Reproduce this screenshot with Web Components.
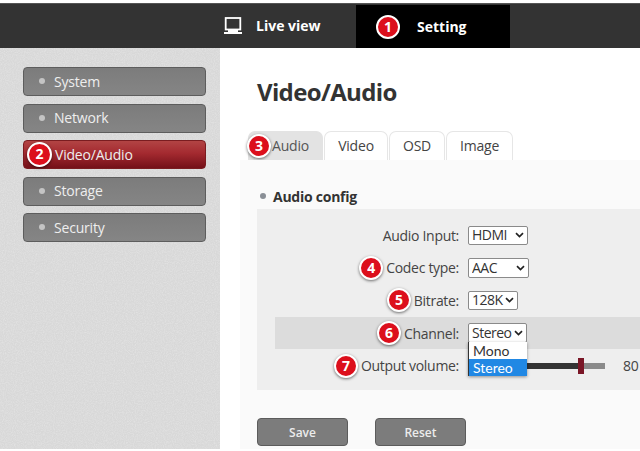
<!DOCTYPE html>
<html lang="en">
<head>
<meta charset="utf-8">
<title>Video/Audio</title>
<style>
html,body{margin:0;padding:0;background:#fff;}
body{width:640px;height:451px;overflow:hidden;font-family:"Open Sans","Liberation Sans",sans-serif;color:#333;}
</style>
</head>
<body>
<app-shell>
  <top-bar slot="top">
    <nav-link>
      <svg slot="icon" width="20" height="18" viewBox="0 0 20 18" fill="none"><rect x="2.7" y="1" width="14.6" height="11.5" stroke="#fff" stroke-width="1.8"/><rect x="5" y="13" width="10" height="2" fill="#fff"/><rect x="1" y="15" width="18" height="2" fill="#fff"/></svg>
      Live view
    </nav-link>
    <nav-link active><num-badge slot="icon" n="1"></num-badge>Setting</nav-link>
  </top-bar>
  <side-menu slot="side">
    <menu-item>System</menu-item>
    <menu-item>Network</menu-item>
    <menu-item active><num-badge slot="mark" n="2"></num-badge>Video/Audio</menu-item>
    <menu-item>Storage</menu-item>
    <menu-item>Security</menu-item>
  </side-menu>
  <video-page slot="main">
    <tab-strip slot="tabs">
      <tab-button active w="75"><num-badge slot="mark" n="3"></num-badge>Audio</tab-button>
      <tab-button w="64">Video</tab-button>
      <tab-button w="56">OSD</tab-button>
      <tab-button w="67">Image</tab-button>
    </tab-strip>
    <form-panel>
      <form-row label="Audio Input:"><select-box w="60" h="19" value="HDMI"></select-box></form-row>
      <form-row label="Codec type:" n="4"><select-box w="61" h="20" value="AAC"></select-box></form-row>
      <form-row label="Bitrate:" n="5"><select-box w="50" h="19" value="128K"></select-box></form-row>
      <form-row label="Channel:" n="6" highlight>
        <select-box w="59" h="20" value="Stereo"></select-box>
      </form-row>
      <form-row label="Output volume:" n="7">
        <volume-slider value="80"></volume-slider>
        <drop-list></drop-list>
      </form-row>
    </form-panel>
    <action-bar>
      <action-button>Save</action-button>
      <action-button>Reset</action-button>
    </action-bar>
  </video-page>
</app-shell>

<script>
function comp(name, css, html){
  customElements.define(name, class extends HTMLElement{
    constructor(){super();this.attachShadow({mode:'open'});}
    connectedCallback(){
      const h = typeof html==='function'?html(this):html;
      const c = typeof css==='function'?css(this):css;
      this.shadowRoot.innerHTML='<style>'+c+'</style>'+h;
    }
  });
}
comp('app-shell',`
  :host{display:grid;grid-template-columns:220px 1fr;grid-template-rows:45px 401px;width:640px;height:451px;padding-top:3px;box-sizing:border-box;}
  .t{grid-column:1/3;display:block}
`,`<div class="t"><slot name="top"></slot></div><slot name="side"></slot><slot name="main"></slot>`);

comp('top-bar',`
  :host{display:flex;height:45px;background:#333;border-top:1px solid #555;box-sizing:border-box;padding-left:223px;align-items:stretch;}
`,`<slot></slot>`);

comp('nav-link',
 h=>`:host{display:flex;align-items:center;box-sizing:border-box;color:#fff;font-weight:700;font-size:14px;white-space:nowrap;${h.hasAttribute('active')
   ?'background:#000;width:154px;margin-left:36px;margin-top:1px;padding-left:20px;gap:17px;':'gap:13px;width:97px;padding-bottom:1px;'}}
   ::slotted(svg){display:block;flex:none}`,
 `<slot name="icon"></slot><slot></slot>`);

comp('num-badge',`
  :host{display:inline-flex;flex:none;align-items:center;justify-content:center;width:24px;height:24px;box-sizing:border-box;border-radius:50%;background:#dc0f1c;border:2.5px solid #fff;box-shadow:0 1px 3px rgba(0,0,0,.55);color:#fff;font:700 14px/1 "Open Sans",sans-serif;}
`,h=>h.getAttribute('n'));

comp('side-menu',`
  :host{display:block;position:relative;background:#d8d8d8;padding:19px 14px 0 23px;box-sizing:border-box;height:401px;overflow:hidden;}
  svg{position:absolute;inset:0;width:100%;height:100%;}
  .l{position:relative;display:flex;flex-direction:column;gap:7.6px}
`,`<svg aria-hidden="true"><filter id="n"><feTurbulence type="fractalNoise" baseFrequency=".9" numOctaves="2" seed="4"/><feColorMatrix values="0 0 0 0 1  0 0 0 0 1  0 0 0 0 1  .5 0 0 0 -.18"/></filter><rect width="100%" height="100%" filter="url(#n)"/></svg><div class="l"><slot></slot></div>`);

comp('menu-item',
 h=>`:host{display:flex;align-items:center;height:29px;box-sizing:border-box;border:1px solid #5d5d5d;border-radius:4px;color:#eee;font-size:14px;letter-spacing:-.2px;padding-bottom:1px;padding-left:${h.hasAttribute('active')?'3':'15'}px;gap:${h.hasAttribute('active')?'3':'9'}px;
   ${h.hasAttribute('active')?'background:linear-gradient(#b24444,#a42a30 45%,#741018);border-color:#7a1c20;':'background:linear-gradient(#7c7c7c,#858585);'}}
   i{width:6px;height:6px;border-radius:50%;background:#c4c4c4;}
   ::slotted(num-badge){width:25px;height:25px}`,
 h=>`${h.hasAttribute('active')?'':'<i></i>'}<slot name="mark"></slot><slot></slot>`);

comp('video-page',`
  :host{display:flex;flex-direction:column;height:401px;overflow:hidden;background:#fff;padding-left:20px;}
  h1{margin:0 0 0 17px;padding:27px 0 22px;font-size:24px;line-height:34px;font-weight:700;color:#333;letter-spacing:-.65px;}
  .c{background:#fafafa;flex:1;padding:0;}
  .s{display:flex;align-items:center;gap:6px;margin:27px 0 0 17px;height:18px;padding-left:3px;font-weight:700;font-size:14px;color:#333;letter-spacing:-.25px;}
  .s i{width:6px;height:6px;border-radius:50%;background:#8a8f96;margin-right:1px}
`,`<h1>Video/Audio</h1><div class="tabs"><slot name="tabs"></slot></div><div class="c"><div class="s"><i></i>Audio config</div><slot></slot></div>`);

comp('tab-strip',`
  :host{display:flex;gap:1px;padding-left:8px;height:29px;}
`,`<slot></slot>`);

comp('tab-button',
 h=>`:host{display:flex;align-items:center;box-sizing:border-box;width:${h.getAttribute('w')}px;height:29px;border:1px solid #e6e6e6;border-bottom:0;border-radius:7px 7px 0 0;font-size:14px;letter-spacing:-.2px;color:#444;justify-content:center;padding-bottom:1px;
   ${h.hasAttribute('active')?'background:#e3e3e3;border-color:#e3e3e3;justify-content:flex-start;color:#555;':'background:#fff;'}}
   ::slotted(num-badge){margin-left:-2px;margin-right:1px}`,
 `<slot name="mark"></slot><slot></slot>`);

comp('form-panel',`
  :host{display:block;margin:4px 0 0 17px;background:#eee;padding:10px 0 9px 18px;height:181px;box-sizing:border-box;}
`,`<slot></slot>`);

comp('form-row',
 h=>`:host{display:grid;grid-template-columns:184px 1fr;column-gap:9px;align-items:center;height:32.6px;position:relative;font-size:14px;letter-spacing:-.3px;color:#444;${h.hasAttribute('highlight')?'background:#dcdcdc;':''}}
  .l{display:flex;justify-content:flex-end;align-items:center;gap:3px;white-space:nowrap;}
  .v{display:block;min-width:0}`,
 h=>`<div class="l">${h.getAttribute('n')?`<num-badge n="${h.getAttribute('n')}"></num-badge>`:''}<span>${h.getAttribute('label')}</span></div><div class="v"><slot></slot></div>`);

comp('select-box',
 h=>`:host{display:block;position:relative;width:${h.getAttribute('w')}px;height:${h.getAttribute('h')}px}
 select{appearance:none;-webkit-appearance:none;display:block;width:100%;height:100%;box-sizing:border-box;font:14px/1 "Open Sans",sans-serif;letter-spacing:-.5px;color:#333;background:#fff;border:1px solid #8a8a8a;border-radius:2px;padding:0 0 0 3px;margin:0}
 svg{position:absolute;right:4px;top:50%;margin-top:-3px;pointer-events:none}`,
 h=>`<select><option>${h.getAttribute('value')}</option></select><svg width="9" height="6" viewBox="0 0 9 6" fill="none"><path d="M1 1.2 4.5 4.5 8 1.2" stroke="#222" stroke-width="1.7"/></svg>`);

comp('volume-slider',`
  :host{display:flex;align-items:center;width:172px;height:16px;color:#444;font-size:14px;}
  .a{width:110px;height:6px;background:#333;flex:none}
  .t{width:6px;height:16px;background:#7a1626;flex:none}
  .b{width:21px;height:6px;background:#8a8a8a;flex:none}
  .v{margin-left:18px}
`,h=>`<div class="a"></div><div class="t"></div><div class="b"></div><span class="v">${h.getAttribute('value')}</span>`);

comp('drop-list',`
  :host{display:block;position:absolute;left:193px;top:-7px;width:59px;box-sizing:border-box;background:#fff;border-left:1px solid #333;box-shadow:0 1px 3px rgba(0,0,0,.4);font:14px/17px Lato,"Open Sans",sans-serif;letter-spacing:0;color:#333;z-index:2}
  div{height:17px;padding-left:4px}
  .on{background:#2188e4;color:#fff}
`,`<div>Mono</div><div class="on">Stereo</div>`);

comp('action-bar',`
  :host{display:flex;gap:27px;margin:28px 0 0 17px;}
`,`<slot></slot>`);

comp('action-button',`
  :host{display:flex;align-items:center;justify-content:center;width:91px;height:28px;box-sizing:border-box;background:#7c7c7c;border:1px solid #5c5c5c;border-radius:4px;color:#ececec;font-size:12px;font-weight:600}
`,`<slot></slot>`);
</script>
</body>
</html>
